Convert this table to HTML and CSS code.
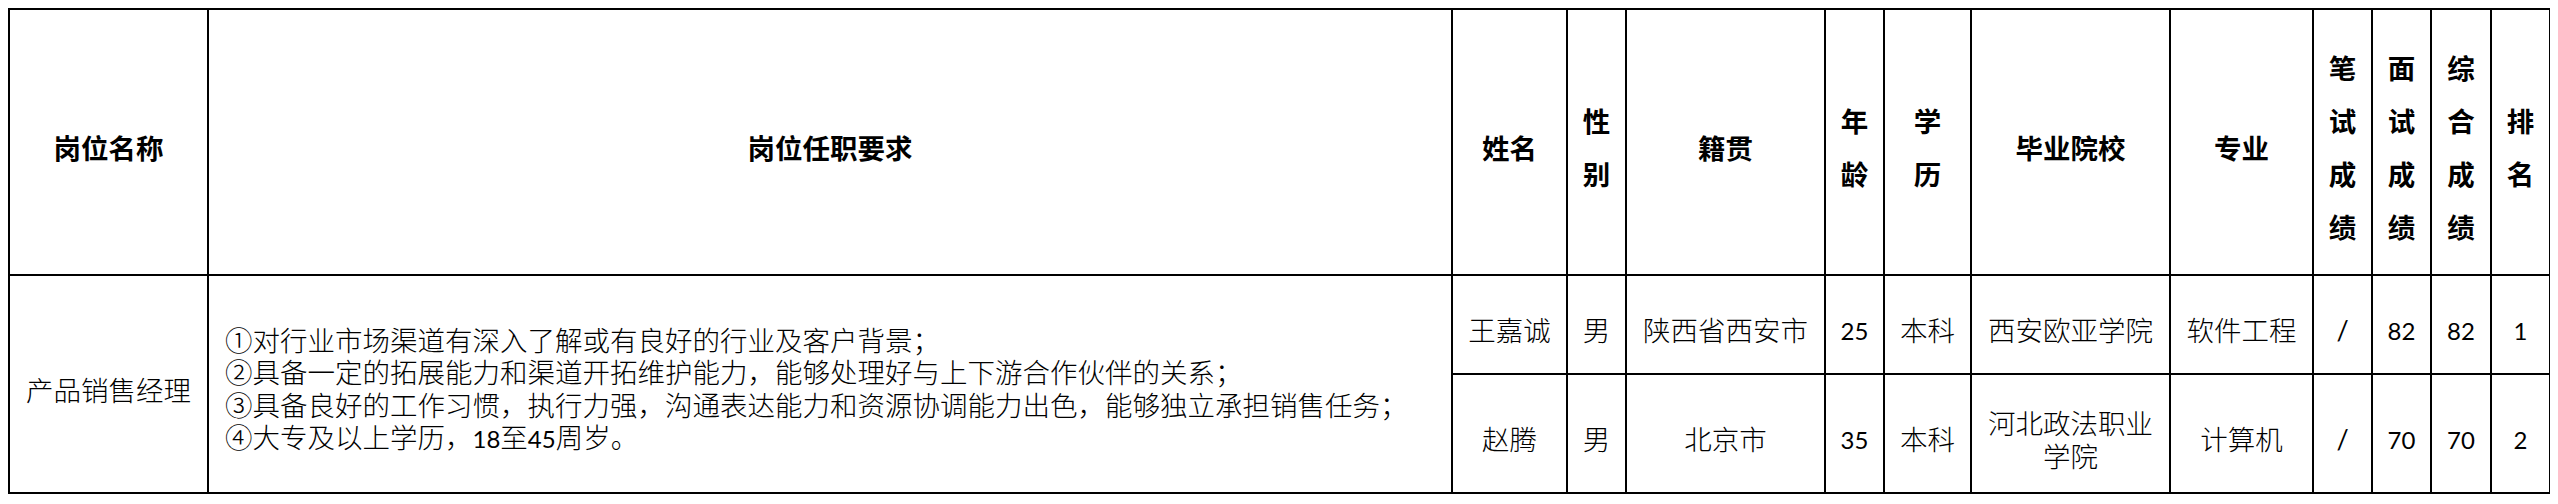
FILE: index.html
```html
<!DOCTYPE html>
<html lang="zh-CN">
<head>
<meta charset="utf-8">
<title>岗位成绩表</title>
<link rel="stylesheet" href="styles.css">
</head>
<body>
<table class="sheet">
  <colgroup>
    <col class="w-post">
    <col class="w-req">
    <col class="w-name">
    <col class="w-narrow">
    <col class="w-wide">
    <col class="w-narrow">
    <col class="w-edu">
    <col class="w-wide">
    <col class="w-major">
    <col class="w-narrow">
    <col class="w-narrow">
    <col class="w-score">
    <col class="w-narrow">
  </colgroup>
  <thead>
    <tr class="head-row">
      <th>岗位名称</th>
      <th>岗位任职要求</th>
      <th>姓名</th>
      <th>性别</th>
      <th>籍贯</th>
      <th>年龄</th>
      <th class="stack">学历</th>
      <th>毕业院校</th>
      <th>专业</th>
      <th>笔试成绩</th>
      <th>面试成绩</th>
      <th>综合成绩</th>
      <th>排名</th>
    </tr>
  </thead>
  <tbody>
    <tr class="row-a">
      <td rowspan="2">产品销售经理</td>
      <td rowspan="2" class="req">
        <p class="req-line">①对行业市场渠道有深入了解或有良好的行业及客户背景；</p>
        <p class="req-line">②具备一定的拓展能力和渠道开拓维护能力，能够处理好与上下游合作伙伴的关系；</p>
        <p class="req-line">③具备良好的工作习惯，执行力强，沟通表达能力和资源协调能力出色，能够独立承担销售任务；</p>
        <p class="req-line">④大专及以上学历，<span class="num">18</span>至<span class="num">45</span>周岁。</p>
      </td>
      <td>王嘉诚</td>
      <td>男</td>
      <td>陕西省西安市</td>
      <td><span class="num">25</span></td>
      <td>本科</td>
      <td>西安欧亚学院</td>
      <td>软件工程</td>
      <td><span class="num slash">/</span></td>
      <td><span class="num">82</span></td>
      <td><span class="num">82</span></td>
      <td><span class="num">1</span></td>
    </tr>
    <tr class="row-b">
      <td>赵腾</td>
      <td>男</td>
      <td>北京市</td>
      <td><span class="num">35</span></td>
      <td>本科</td>
      <td>河北政法职业学院</td>
      <td>计算机</td>
      <td><span class="num slash">/</span></td>
      <td><span class="num">70</span></td>
      <td><span class="num">70</span></td>
      <td><span class="num">2</span></td>
    </tr>
  </tbody>
</table>
</body>
</html>
```
FILE: styles.css
```css
html, body {
  background: #fff;
}

body {
  margin: 8px;
  font-family: "Noto Sans CJK SC", sans-serif;
  color: #000;
}

.sheet {
  border-collapse: collapse;
  table-layout: fixed;
  width: 2543px;
  font-size: 27.5px;
}

.w-post { width: 199px; }
.w-req { width: 1244px; }
.w-name { width: 115px; }
.w-narrow { width: 59px; }
.w-wide { width: 199px; }
.w-edu { width: 87px; }
.w-major { width: 143px; }
.w-score { width: 60px; }

.sheet th,
.sheet td {
  border: 2px solid #000;
  padding: 10px 8px 0;
  text-align: center;
  vertical-align: middle;
}

.sheet th {
  font-weight: 700;
  line-height: 53px;
}

.sheet th.stack {
  padding-left: 18px;
  padding-right: 18px;
}

.sheet td {
  font-weight: 300;
  line-height: 32.5px;
}

.head-row { height: 266px; }
.row-a { height: 99px; }
.row-b { height: 119px; }

.sheet td.req {
  text-align: left;
  padding-left: 16px;
  padding-right: 4px;
}

.req-line {
  margin: 0;
  white-space: nowrap;
}

.num {
  font-family: Lato, "Liberation Sans", sans-serif;
  font-weight: 400;
  font-size: 24px;
}

.slash {
  font-size: 27px;
}
```
